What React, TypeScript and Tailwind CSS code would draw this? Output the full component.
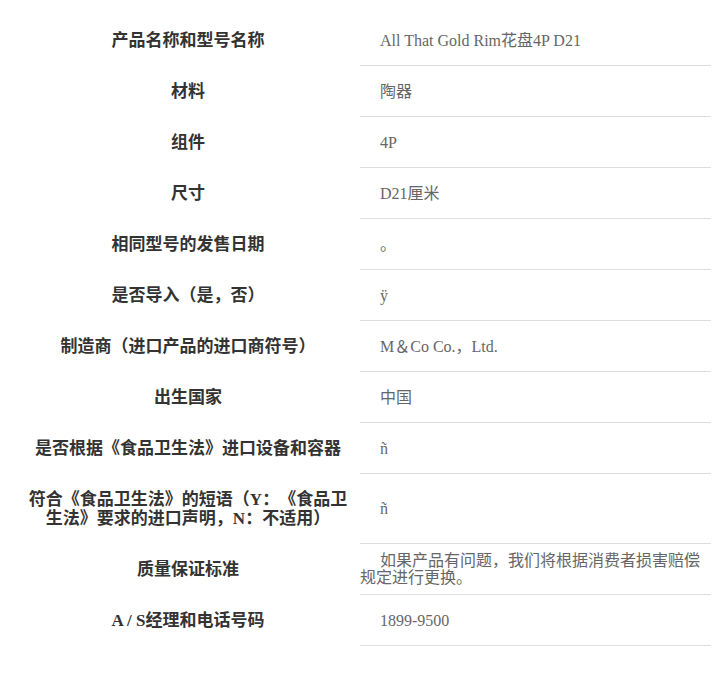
import React from 'react';

interface SpecRow {
  label: string;
  value: string;
}

const rows: SpecRow[] = [
  { label: '产品名称和型号名称', value: 'All That Gold Rim花盘4P D21' },
  { label: '材料', value: '陶器' },
  { label: '组件', value: '4P' },
  { label: '尺寸', value: 'D21厘米' },
  { label: '相同型号的发售日期', value: '。' },
  { label: '是否导入（是，否）', value: 'ÿ' },
  { label: '制造商（进口产品的进口商符号）', value: 'M＆Co Co.，Ltd.' },
  { label: '出生国家', value: '中国' },
  { label: '是否根据《食品卫生法》进口设备和容器', value: 'ñ' },
  {
    label: '符合《食品卫生法》的短语（Y：《食品卫生法》要求的进口声明，N：不适用）',
    value: 'ñ',
  },
  { label: '质量保证标准', value: '如果产品有问题，我们将根据消费者损害赔偿规定进行更换。' },
  { label: 'A / S经理和电话号码', value: '1899-9500' },
];

const cellFont = { fontFamily: '"Liberation Serif", "Noto Sans CJK SC", serif' };

const App: React.FC = () => {
  return (
    <div className="min-h-[680px] w-[721px] bg-white pt-[15px] [text-spacing-trim:space-all]">
      <div className="w-[711px]">
        {rows.map((row) => (
          <div key={row.label} className="flex min-h-[51px]">
            {/* label column */}
            <div
              className="flex w-[360px] shrink-0 items-center justify-center pl-[23px] pr-[7px] py-[16px] text-center text-[17px] font-bold leading-[19px] text-[#333]"
              style={cellFont}
            >
              {row.label}
            </div>
            {/* value column */}
            <div
              className="flex flex-1 items-center border-b border-[#dddddd] py-[8px] text-[16px] leading-[17px] text-[#666]"
              style={cellFont}
            >
              <p className="indent-[20px]">{row.value}</p>
            </div>
          </div>
        ))}
      </div>
    </div>
  );
};

export default App;
